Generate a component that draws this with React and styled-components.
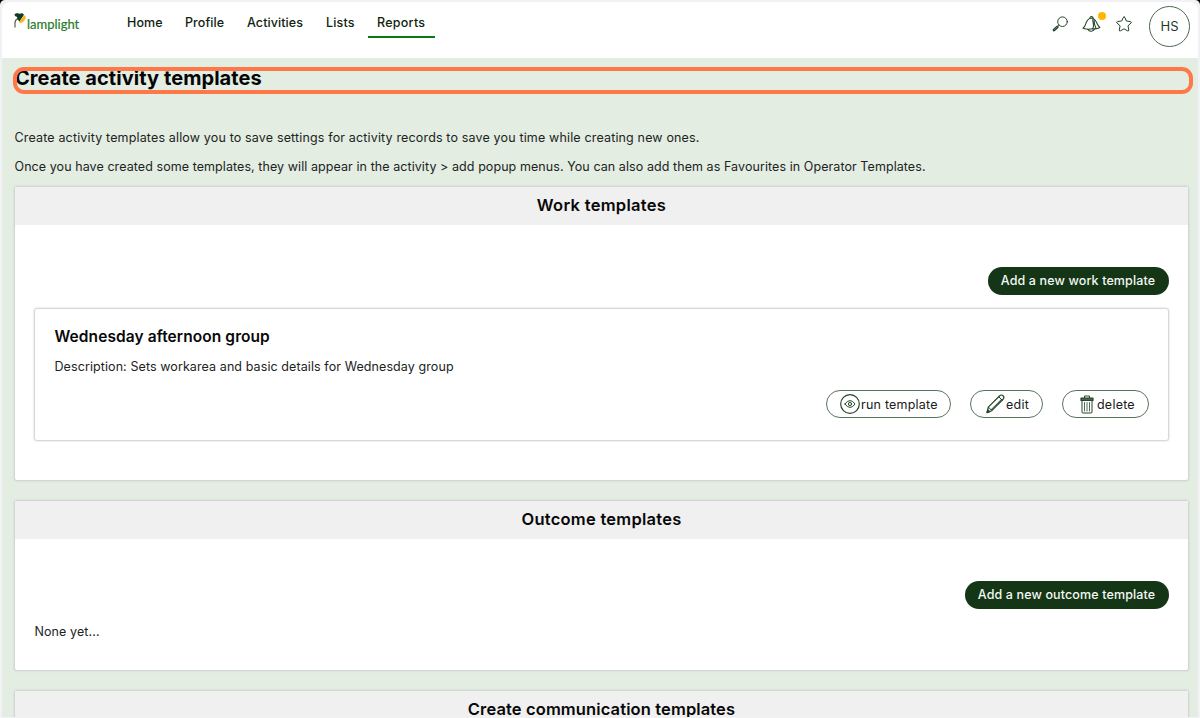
import React from "react";
import styled, { createGlobalStyle } from "styled-components";

const GlobalStyle = createGlobalStyle`
  *, *::after { box-sizing: border-box; }
  body { margin: 0; background: #000; overflow: hidden; font-family: Inter, "Liberation Sans", sans-serif; color: #111; }
  h1, h2, h3, p { margin: 0; }
  button { font-family: inherit; margin: 0; }
`;
const Frame = styled.div`
  height: 718px; padding: 2px 2px 1px; background: #f1f1f6; border-radius: 5px 5px 0 0; overflow: hidden;
`;
const Page = styled.div`
  height: 715px; background: #e3ede2; border-radius: 8px 8px 0 0; overflow: hidden;
`;
const Header = styled.header`
  height: 56px; background: #fff; display: flex; align-items: flex-start; justify-content: space-between; padding: 0 8px 0 12px;
`;
const Left = styled.div`display: flex;`;
const Logo = styled.div`
  width: 104px; height: 40px; padding-top: 10px; display: flex; color: #2b7a2b;
  span { font: 400 13px/24px Lato, sans-serif; margin-left: -1px; -webkit-text-stroke: 0.2px #2b7a2b; }
`;
const Nav = styled.nav`display: flex; gap: 4px;`;
const NavItem = styled.a`
  width: ${(p) => p.$w}px; height: 36px; padding-left: 9px; white-space: nowrap;
  font-size: 12.5px; font-weight: 500; line-height: 41px; color: #10240f;
  letter-spacing: ${(p) => p.$ls}px; border-bottom: 2px solid ${(p) => (p.$active ? "#087a12" : "transparent")};
`;
const Tools = styled.div`display: flex; padding-top: 4px;`;
const Tool = styled.div`position: relative; width: ${(p) => p.$w}px; height: 34px; padding-top: 9px; svg { display: block; }`;
const Dot = styled.i`position: absolute; left: 16px; top: 5.5px; width: 8px; height: 8px; border-radius: 50%; background: #ffb700;`;
const Avatar = styled.div`
  width: 41px; height: 41px; border: 1px solid #4c654d; border-radius: 50%; text-align: center;
  font-size: 13px; line-height: 39px; color: #24382a; margin-left: 3px;
`;
const Main = styled.main`padding: 9px 9px 0 12px;`;
const Title = styled.h1`
  position: relative; height: 27px; width: 1178px; padding-left: 1px; font-size: 20px; line-height: 22px; font-weight: 700; color: #050505; letter-spacing: ${(p) => p.$ls}px;
  white-space: nowrap;
  &::after { content: ""; position: absolute; left: -1px; top: 0; width: 1180px; height: 27px; border: 4px solid #ff7847; border-radius: 11px; }
`;
const Intro = styled.div`padding: 29px 0 0 0.5px; height: 93px;`;
const Text = styled.p`
  font-size: 12.5px; line-height: 29px; color: #1c241d; white-space: nowrap; letter-spacing: ${(p) => p.$ls || 0}px;
`;
const Card = styled.section`
  width: 1173px; height: ${(p) => p.$h}px; margin-left: 1px; margin-bottom: 21px; background: #fff; border-radius: 2px;
  box-shadow: 0 0 2px 1px #c9cfca;
`;
const CardHeader = styled.h2`
  height: 38px; background: #f0f0f0; text-align: center; font-size: 16.5px; font-weight: 600; line-height: 37px; color: #080808;
  letter-spacing: ${(p) => p.$ls}px;
`;
const Body = styled.div`padding: 42px 20px 0 19px; display: flex; flex-direction: column;`;
const Primary = styled.button`
  align-self: flex-end; width: ${(p) => p.$w}px; height: 28px; padding: 0 0 1px; margin-right: -0.5px; border: 0; border-radius: 14px; background: #143616;
  color: #f5f8f4; font-size: 12.5px; font-weight: 500; line-height: 26px; letter-spacing: 0.13px; white-space: nowrap;
`;
const Item = styled.article`
  margin: 14px 0 0 1px; height: 131px; border-radius: 2px; box-shadow: 0 0 2px 1px #cbcbcb; padding: 16px 19px 0 19.5px;
`;
const ItemTitle = styled.h3`font-size: 15.5px; line-height: 23px; font-weight: 600; color: #080808; letter-spacing: ${(p) => p.$ls}px;`;
const Description = styled(Text)`line-height: 20px; margin-top: 9px;`;
const Actions = styled.div`display: flex; justify-content: flex-end; gap: 19px; margin-top: 13px;`;
const Action = styled.button`
  display: flex; align-items: center; width: ${(p) => p.$w}px; height: 28px; padding: 0 0 0 ${(p) => p.$p}px;
  border: 1px solid #5b725d; border-radius: 14px; background: #fff; color: #182019; font-size: 12.5px; white-space: nowrap;
  letter-spacing: 0.22px;
  svg { flex: none; margin-right: ${(p) => p.$g}px; }
`;
const Empty = styled(Text)`line-height: 20px; margin: 13px 0 0 0.5px;`;

const Stroke = ({ w, h, children }) => (
  <svg width={w} height={h} viewBox={`0 0 ${w} ${h}`} fill="none" stroke="#24452a" strokeWidth="1" strokeLinecap="round" strokeLinejoin="round">{children}</svg>
);
const Lamp = () => (
  <svg width="14" height="18" viewBox="0 0 14 18">
    <path d="M1 15.5V11Q1 8 3.8 6.5" fill="none" stroke="#506556" strokeWidth="1.2" />
    <path d="M.5 2 3.5 1 5 1.8 8.5 1.2 10 2.8 5.5 9.5 3.5 7.5 3 5 1 4Z" fill="#123c20" />
    <path d="M10.3 3.2C13.3 4.5 11.5 9.5 6 11.2Q4.8 10.5 5.5 9.3Z" fill="#f6b51b" />
  </svg>
);
const SearchIcon = () => <Stroke w={17} h={18}><circle cx="10.5" cy="6.7" r="4.8" /><path d="M7 10.2 6 11.2" /><path d="M5.3 12 2 15" strokeWidth="2.8" /><path d="M5 12.1 2.5 14.4" stroke="#91a593" strokeWidth=".6" /></Stroke>;
const BellIcon = () => <Stroke w={20} h={18}><path d="M1 13.2C4.2 11.5 3.2 7 5.8 4.8Q7.5 3 10 3.2C14.8 3.6 14.2 9.5 17.8 12.5Q15.5 14.2 11 13.8 5 14.8 1 13.2ZM7.8 3.2Q8 1.5 9.6 1.5 11.3 1.7 11.2 3.4" strokeWidth="1.1" /><path d="M11 4C9.8 7 13.2 10 10.8 13.6M12.2 5Q11.8 9.5 14 13.2M6 14.2Q7 16.6 9.5 16.2 12 15.8 12.5 14.2" strokeWidth="1.1" /></Stroke>;
const StarIcon = () => <Stroke w={18} h={18}><path d="M9.1 2Q9.8 2 10.2 3L11.3 6 15.5 6.5Q17 7 16 8L13 10.8 13.8 15Q13.8 16.5 12.4 15.8L9 13.8 5.6 15.8Q4.1 16.5 4.3 15L5.1 10.8 2 8Q1 7 2.4 6.5L6.7 6 8 3Q8.4 2 9.1 2Z" /></Stroke>;
const EyeIcon = () => <Stroke w={20} h={20}><circle cx="10" cy="10" r="9.3" strokeWidth="1.2" /><path d="M5 10Q7.2 6.6 10 6.6T15 10Q12.8 13.4 10 13.4T5 10Z" /><circle cx="10" cy="10" r="1.6" /></Stroke>;
const PencilIcon = () => <Stroke w={19} h={20}><path d="M1 18.5 2.3 13.2 13.5 2Q15.5 0 17.2 2 18.7 3.8 16.8 5.5L5.8 16.7Z" strokeWidth="1.2" /><path d="M2.5 13.2 5.8 16.5M5 15.8 15.5 5.3M12.8 2.8 16.2 6.2" /><path d="M1 18.5 1.8 15.4 3.8 17.5Z" fill="#24452a" /></Stroke>;
const TrashIcon = () => <Stroke w={14} h={19}><path d="M1 3H13V5.5H1Z" fill="#486249" strokeWidth="1.2" /><path d="M4.5 2.8V1H9.5V2.8M2 6V17Q2 18 3 18H11Q12 18 12 17V6" /><path d="M4.5 7.5V16M7 7.5V16M9.5 7.5V16" strokeWidth=".8" /></Stroke>;

const navItems = [["Home", 54, 0.1], ["Profile", 58, 0.1], ["Activities", 75, 0.08], ["Lists", 47, 0.15], ["Reports", 67, 0.26]];

export default function App() {
  return (
    <Frame>
      <GlobalStyle />
      <Page>
        <Header>
          <Left>
            <Logo><Lamp /><span>lamplight</span></Logo>
            <Nav>{navItems.map(([name, w, ls]) => <NavItem key={name} $w={w} $ls={ls} $active={name === "Reports"}>{name}</NavItem>)}</Nav>
          </Left>
          <Tools>
            <Tool $w={30}><SearchIcon /></Tool>
            <Tool $w={33}><BellIcon /><Dot /></Tool>
            <Tool $w={31}><StarIcon /></Tool>
            <Avatar>HS</Avatar>
          </Tools>
        </Header>
        <Main>
          <Title $ls={0.06}>Create activity templates</Title>
          <Intro>
            <Text $ls={0.155}>Create activity templates allow you to save settings for activity records to save you time while creating new ones.</Text>
            <Text $ls={0.073}>Once you have created some templates, they will appear in the activity &gt; add popup menus. You can also add them as Favourites in Operator Templates.</Text>
          </Intro>
          <Card $h={293}>
            <CardHeader $ls={0.3}>Work templates</CardHeader>
            <Body>
              <Primary $w={181}>Add a new work template</Primary>
              <Item>
                <ItemTitle $ls={0.08}>Wednesday afternoon group</ItemTitle>
                <Description $ls={0.09}>Description: Sets workarea and basic details for Wednesday group</Description>
                <Actions>
                  <Action $w={125} $p={13} $g={1}><EyeIcon />run template</Action>
                  <Action $w={73} $p={15} $g={1}><PencilIcon />edit</Action>
                  <Action $w={87} $p={17} $g={3}><TrashIcon />delete</Action>
                </Actions>
              </Item>
            </Body>
          </Card>
          <Card $h={169}>
            <CardHeader $ls={0.25}>Outcome templates</CardHeader>
            <Body>
              <Primary $w={204}>Add a new outcome template</Primary>
              <Empty $ls={0.1}>None yet...</Empty>
            </Body>
          </Card>
          <Card $h={169}><CardHeader $ls={0.12}>Create communication templates</CardHeader></Card>
        </Main>
      </Page>
    </Frame>
  );
}
